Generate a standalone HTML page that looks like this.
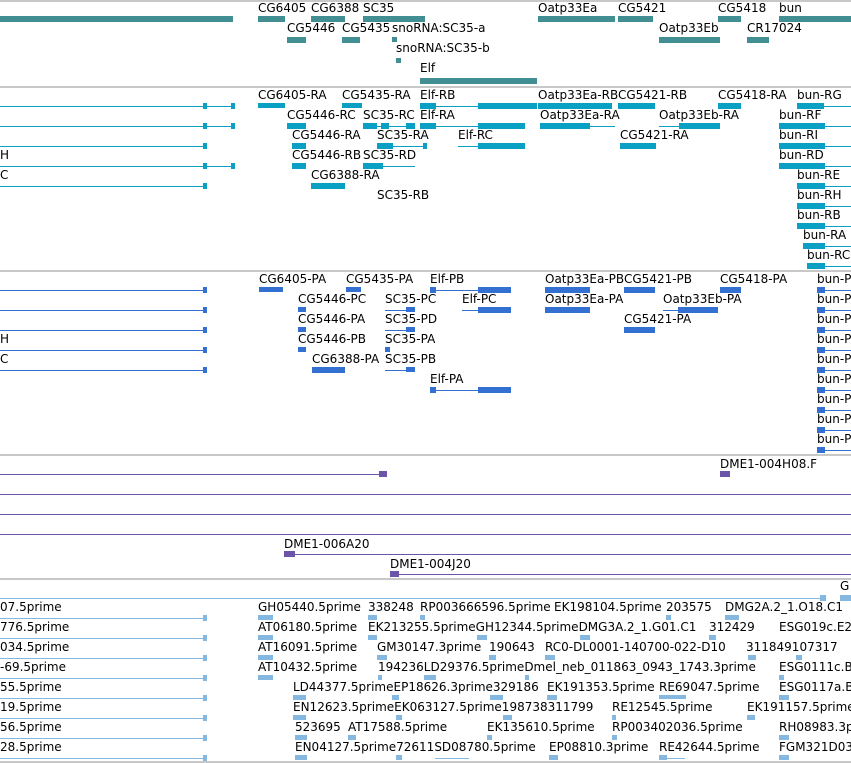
<!DOCTYPE html>
<html><head><meta charset="utf-8"><style>
*{margin:0;padding:0}
body{width:851px;height:763px;background:#fff;position:relative;overflow:hidden;font-family:"DejaVu Sans","Liberation Sans",sans-serif}
.t{position:absolute;font-size:12px;line-height:13px;letter-spacing:0;color:#000;white-space:nowrap}
.s{position:absolute;left:0;width:851px;height:2px;background:#c8c8c8}
.b{position:absolute}
.l{position:absolute;height:1px}
.T{background:#418e93}.C{background:#0aa0c3}.B{background:#3370d2}.P{background:#6c55a8}.E{background:#85b8e0}
</style></head><body>
<div class="s" style="top:0"></div>
<div class="s" style="top:86px"></div>
<div class="s" style="top:270px"></div>
<div class="s" style="top:454px"></div>
<div class="s" style="top:578px"></div>
<div class="s" style="top:761px"></div>

<div class="b T" style="left:0;top:16px;width:233px;height:6px"></div>
<div class="t" style="left:258px;top:2px">CG6405</div><div class="b T" style="left:258px;top:16px;width:27px;height:6px"></div>
<div class="t" style="left:311px;top:2px">CG6388</div><div class="b T" style="left:311px;top:16px;width:34px;height:6px"></div>
<div class="t" style="left:363px;top:2px">SC35</div><div class="b T" style="left:363px;top:16px;width:62px;height:6px"></div>
<div class="t" style="left:538px;top:2px">Oatp33Ea</div><div class="b T" style="left:538px;top:16px;width:77px;height:6px"></div>
<div class="t" style="left:618px;top:2px">CG5421</div><div class="b T" style="left:618px;top:16px;width:35px;height:6px"></div>
<div class="t" style="left:718px;top:2px">CG5418</div><div class="b T" style="left:718px;top:16px;width:23px;height:6px"></div>
<div class="t" style="left:779px;top:2px">bun</div><div class="b T" style="left:779px;top:16px;width:72px;height:6px"></div>
<div class="t" style="left:287px;top:22px">CG5446</div><div class="b T" style="left:287px;top:37px;width:19px;height:6px"></div>
<div class="t" style="left:342px;top:22px">CG5435</div><div class="b T" style="left:342px;top:37px;width:18px;height:6px"></div>
<div class="t" style="left:392px;top:22px">snoRNA:SC35-a</div><div class="b T" style="left:392px;top:37px;width:5px;height:5px"></div>
<div class="t" style="left:659px;top:22px">Oatp33Eb</div><div class="b T" style="left:659px;top:37px;width:61px;height:6px"></div>
<div class="t" style="left:747px;top:22px">CR17024</div><div class="b T" style="left:747px;top:37px;width:22px;height:6px"></div>
<div class="t" style="left:396px;top:42px">snoRNA:SC35-b</div><div class="b T" style="left:396px;top:58px;width:5px;height:5px"></div>
<div class="t" style="left:420px;top:62px">Elf</div><div class="b T" style="left:420px;top:78px;width:117px;height:6px"></div>

<div class="l C" style="left:0;top:106px;width:235px"></div>
<div class="l C" style="left:0;top:126px;width:235px"></div>
<div class="l C" style="left:0;top:146px;width:207px"></div>
<div class="l C" style="left:0;top:166px;width:235px"></div>
<div class="l C" style="left:0;top:186px;width:207px"></div>
<div class="b C" style="left:203px;top:103px;width:4px;height:6px"></div><div class="b C" style="left:231px;top:103px;width:4px;height:6px"></div>
<div class="b C" style="left:203px;top:123px;width:4px;height:6px"></div><div class="b C" style="left:231px;top:123px;width:4px;height:6px"></div>
<div class="b C" style="left:203px;top:143px;width:4px;height:6px"></div>
<div class="b C" style="left:203px;top:163px;width:4px;height:6px"></div><div class="b C" style="left:231px;top:163px;width:4px;height:6px"></div>
<div class="b C" style="left:203px;top:183px;width:4px;height:6px"></div>
<div class="t" style="left:0;top:149px">H</div><div class="t" style="left:0;top:169px">C</div>

<div class="t" style="left:258px;top:89px">CG6405-RA</div><div class="b C" style="left:258px;top:103px;width:27px;height:5px"></div>
<div class="t" style="left:342px;top:89px">CG5435-RA</div><div class="b C" style="left:342px;top:103px;width:20px;height:5px"></div>
<div class="t" style="left:420px;top:89px">Elf-RB</div><div class="l C" style="left:420px;top:106px;width:117px"></div><div class="b C" style="left:420px;top:103px;width:16px;height:6px"></div><div class="b C" style="left:478px;top:103px;width:59px;height:6px"></div>
<div class="t" style="left:538px;top:89px">Oatp33Ea-RB</div><div class="b C" style="left:538px;top:103px;width:74px;height:6px"></div>
<div class="t" style="left:618px;top:89px">CG5421-RB</div><div class="b C" style="left:618px;top:103px;width:37px;height:6px"></div>
<div class="t" style="left:718px;top:89px">CG5418-RA</div><div class="b C" style="left:718px;top:103px;width:23px;height:6px"></div>
<div class="t" style="left:797px;top:89px">bun-RG</div><div class="b C" style="left:797px;top:103px;width:27px;height:6px"></div><div class="l C" style="left:824px;top:106px;width:27px"></div>

<div class="t" style="left:287px;top:109px">CG5446-RC</div><div class="b C" style="left:287px;top:123px;width:19px;height:6px"></div>
<div class="t" style="left:363px;top:109px">SC35-RC</div><div class="l C" style="left:363px;top:126px;width:52px"></div><div class="b C" style="left:363px;top:123px;width:14px;height:6px"></div><div class="b C" style="left:381px;top:123px;width:8px;height:6px"></div><div class="b C" style="left:406px;top:123px;width:9px;height:6px"></div>
<div class="t" style="left:420px;top:109px">Elf-RA</div><div class="l C" style="left:420px;top:126px;width:105px"></div><div class="b C" style="left:420px;top:123px;width:16px;height:6px"></div><div class="b C" style="left:478px;top:123px;width:47px;height:6px"></div>
<div class="t" style="left:540px;top:109px">Oatp33Ea-RA</div><div class="b C" style="left:540px;top:123px;width:50px;height:6px"></div><div class="l C" style="left:540px;top:126px;width:75px"></div>
<div class="t" style="left:659px;top:109px">Oatp33Eb-RA</div><div class="l C" style="left:659px;top:126px;width:61px"></div><div class="b C" style="left:679px;top:123px;width:41px;height:6px"></div>
<div class="t" style="left:779px;top:109px">bun-RF</div><div class="b C" style="left:779px;top:123px;width:46px;height:6px"></div><div class="l C" style="left:825px;top:126px;width:26px"></div>

<div class="t" style="left:292px;top:129px">CG5446-RA</div><div class="b C" style="left:292px;top:143px;width:14px;height:6px"></div>
<div class="t" style="left:377px;top:129px">SC35-RA</div><div class="l C" style="left:377px;top:146px;width:50px"></div><div class="b C" style="left:377px;top:143px;width:16px;height:6px"></div><div class="b C" style="left:423px;top:143px;width:4px;height:6px"></div>
<div class="t" style="left:458px;top:129px">Elf-RC</div><div class="l C" style="left:458px;top:146px;width:67px"></div><div class="b C" style="left:478px;top:143px;width:47px;height:6px"></div>
<div class="t" style="left:620px;top:129px">CG5421-RA</div><div class="b C" style="left:620px;top:143px;width:36px;height:6px"></div>
<div class="t" style="left:779px;top:129px">bun-RI</div><div class="b C" style="left:779px;top:143px;width:46px;height:6px"></div><div class="l C" style="left:825px;top:146px;width:26px"></div>

<div class="t" style="left:292px;top:149px">CG5446-RB</div><div class="b C" style="left:292px;top:163px;width:14px;height:6px"></div>
<div class="t" style="left:363px;top:149px">SC35-RD</div><div class="b C" style="left:363px;top:163px;width:20px;height:6px"></div><div class="l C" style="left:383px;top:166px;width:32px"></div>
<div class="t" style="left:779px;top:149px">bun-RD</div><div class="b C" style="left:779px;top:163px;width:46px;height:6px"></div><div class="l C" style="left:825px;top:166px;width:26px"></div>

<div class="t" style="left:311px;top:169px">CG6388-RA</div><div class="b C" style="left:311px;top:183px;width:34px;height:6px"></div>
<div class="t" style="left:797px;top:169px">bun-RE</div><div class="b C" style="left:797px;top:183px;width:28px;height:6px"></div><div class="l C" style="left:825px;top:186px;width:26px"></div>
<div class="t" style="left:377px;top:189px">SC35-RB</div>
<div class="t" style="left:797px;top:189px">bun-RH</div><div class="b C" style="left:797px;top:203px;width:28px;height:6px"></div><div class="l C" style="left:825px;top:206px;width:26px"></div>
<div class="t" style="left:797px;top:209px">bun-RB</div><div class="b C" style="left:797px;top:223px;width:28px;height:6px"></div><div class="l C" style="left:825px;top:226px;width:26px"></div>
<div class="t" style="left:803px;top:229px">bun-RA</div><div class="b C" style="left:803px;top:243px;width:22px;height:6px"></div><div class="l C" style="left:825px;top:246px;width:26px"></div>
<div class="t" style="left:807px;top:249px">bun-RC</div><div class="b C" style="left:807px;top:263px;width:18px;height:6px"></div><div class="l C" style="left:825px;top:266px;width:26px"></div>

<div class="l B" style="left:0;top:290px;width:207px"></div>
<div class="l B" style="left:0;top:310px;width:207px"></div>
<div class="l B" style="left:0;top:330px;width:207px"></div>
<div class="l B" style="left:0;top:350px;width:207px"></div>
<div class="l B" style="left:0;top:370px;width:207px"></div>
<div class="b B" style="left:203px;top:287px;width:4px;height:6px"></div>
<div class="b B" style="left:203px;top:307px;width:4px;height:6px"></div>
<div class="b B" style="left:203px;top:327px;width:4px;height:6px"></div>
<div class="b B" style="left:203px;top:347px;width:4px;height:6px"></div>
<div class="b B" style="left:203px;top:367px;width:4px;height:6px"></div>
<div class="t" style="left:0;top:333px">H</div><div class="t" style="left:0;top:353px">C</div>

<div class="t" style="left:259px;top:273px">CG6405-PA</div><div class="b B" style="left:259px;top:287px;width:24px;height:5px"></div>
<div class="t" style="left:346px;top:273px">CG5435-PA</div><div class="b B" style="left:346px;top:287px;width:15px;height:5px"></div>
<div class="t" style="left:430px;top:273px">Elf-PB</div><div class="l B" style="left:430px;top:290px;width:81px"></div><div class="b B" style="left:430px;top:287px;width:6px;height:6px"></div><div class="b B" style="left:478px;top:287px;width:33px;height:6px"></div>
<div class="t" style="left:545px;top:273px">Oatp33Ea-PB</div><div class="b B" style="left:545px;top:287px;width:45px;height:6px"></div>
<div class="t" style="left:624px;top:273px">CG5421-PB</div><div class="b B" style="left:624px;top:287px;width:31px;height:6px"></div>
<div class="t" style="left:720px;top:273px">CG5418-PA</div><div class="b B" style="left:720px;top:287px;width:21px;height:6px"></div>

<div class="t" style="left:298px;top:293px">CG5446-PC</div><div class="b B" style="left:298px;top:307px;width:8px;height:5px"></div>
<div class="t" style="left:385px;top:293px">SC35-PC</div><div class="l B" style="left:385px;top:310px;width:30px"></div><div class="b B" style="left:406px;top:307px;width:9px;height:5px"></div>
<div class="t" style="left:462px;top:293px">Elf-PC</div><div class="l B" style="left:462px;top:310px;width:49px"></div><div class="b B" style="left:478px;top:307px;width:33px;height:6px"></div>
<div class="t" style="left:545px;top:293px">Oatp33Ea-PA</div><div class="b B" style="left:545px;top:307px;width:45px;height:6px"></div>
<div class="t" style="left:663px;top:293px">Oatp33Eb-PA</div><div class="l B" style="left:663px;top:310px;width:55px"></div><div class="b B" style="left:678px;top:307px;width:40px;height:6px"></div>

<div class="t" style="left:298px;top:313px">CG5446-PA</div><div class="b B" style="left:298px;top:327px;width:8px;height:5px"></div>
<div class="t" style="left:385px;top:313px">SC35-PD</div><div class="l B" style="left:385px;top:330px;width:30px"></div><div class="b B" style="left:406px;top:327px;width:9px;height:5px"></div>
<div class="t" style="left:624px;top:313px">CG5421-PA</div><div class="b B" style="left:624px;top:327px;width:31px;height:6px"></div>
<div class="t" style="left:298px;top:333px">CG5446-PB</div><div class="b B" style="left:298px;top:347px;width:8px;height:5px"></div>
<div class="t" style="left:385px;top:333px">SC35-PA</div><div class="b B" style="left:385px;top:347px;width:5px;height:5px"></div>
<div class="t" style="left:312px;top:353px">CG6388-PA</div><div class="b B" style="left:312px;top:367px;width:33px;height:6px"></div>
<div class="t" style="left:385px;top:353px">SC35-PB</div><div class="l B" style="left:385px;top:370px;width:30px"></div><div class="b B" style="left:406px;top:367px;width:9px;height:5px"></div>
<div class="t" style="left:430px;top:373px">Elf-PA</div><div class="l B" style="left:430px;top:390px;width:81px"></div><div class="b B" style="left:430px;top:387px;width:6px;height:6px"></div><div class="b B" style="left:478px;top:387px;width:33px;height:6px"></div>

<div class="t" style="left:817px;top:273px">bun-P</div><div class="b B" style="left:817px;top:287px;width:8px;height:6px"></div><div class="l B" style="left:817px;top:290px;width:34px"></div>
<div class="t" style="left:817px;top:293px">bun-P</div><div class="b B" style="left:817px;top:307px;width:8px;height:6px"></div><div class="l B" style="left:817px;top:310px;width:34px"></div>
<div class="t" style="left:817px;top:313px">bun-P</div><div class="b B" style="left:817px;top:327px;width:8px;height:6px"></div><div class="l B" style="left:817px;top:330px;width:34px"></div>
<div class="t" style="left:817px;top:333px">bun-P</div><div class="b B" style="left:817px;top:347px;width:8px;height:6px"></div><div class="l B" style="left:817px;top:350px;width:34px"></div>
<div class="t" style="left:817px;top:353px">bun-P</div><div class="b B" style="left:817px;top:367px;width:8px;height:6px"></div><div class="l B" style="left:817px;top:370px;width:34px"></div>
<div class="t" style="left:817px;top:373px">bun-P</div><div class="b B" style="left:817px;top:387px;width:8px;height:6px"></div><div class="l B" style="left:817px;top:390px;width:34px"></div>
<div class="t" style="left:817px;top:393px">bun-P</div><div class="b B" style="left:817px;top:407px;width:8px;height:6px"></div><div class="l B" style="left:817px;top:410px;width:34px"></div>
<div class="t" style="left:817px;top:413px">bun-P</div><div class="b B" style="left:817px;top:427px;width:8px;height:6px"></div><div class="l B" style="left:817px;top:430px;width:34px"></div>
<div class="t" style="left:817px;top:433px">bun-P</div><div class="b B" style="left:817px;top:447px;width:8px;height:6px"></div><div class="l B" style="left:817px;top:450px;width:34px"></div>

<div class="l P" style="left:0;top:474px;width:385px"></div><div class="b P" style="left:379px;top:471px;width:8px;height:6px"></div>
<div class="t" style="left:720px;top:458px">DME1-004H08.F</div><div class="b P" style="left:720px;top:471px;width:10px;height:6px"></div>
<div class="l P" style="left:0;top:494px;width:851px"></div>
<div class="l P" style="left:0;top:514px;width:851px"></div>
<div class="l P" style="left:0;top:534px;width:851px"></div>
<div class="t" style="left:284px;top:538px">DME1-006A20</div><div class="l P" style="left:284px;top:554px;width:567px"></div><div class="b P" style="left:284px;top:551px;width:11px;height:6px"></div>
<div class="t" style="left:390px;top:558px">DME1-004J20</div><div class="l P" style="left:390px;top:574px;width:461px"></div><div class="b P" style="left:390px;top:571px;width:9px;height:6px"></div>

<div class="l E" style="left:0;top:598px;width:825px"></div><div class="b E" style="left:820px;top:595px;width:6px;height:6px"></div>
<div class="t" style="left:840px;top:580px">G</div><div class="b E" style="left:840px;top:595px;width:11px;height:6px"></div>
<div class="l E" style="left:0;top:618px;width:207px"></div><div class="b E" style="left:203px;top:615px;width:4px;height:6px"></div>
<div class="l E" style="left:0;top:638px;width:207px"></div><div class="b E" style="left:203px;top:635px;width:4px;height:6px"></div>
<div class="l E" style="left:0;top:658px;width:207px"></div><div class="b E" style="left:203px;top:655px;width:4px;height:6px"></div>
<div class="l E" style="left:0;top:678px;width:207px"></div><div class="b E" style="left:203px;top:675px;width:4px;height:6px"></div>
<div class="l E" style="left:0;top:698px;width:207px"></div><div class="b E" style="left:203px;top:695px;width:4px;height:6px"></div>
<div class="l E" style="left:0;top:718px;width:207px"></div><div class="b E" style="left:203px;top:715px;width:4px;height:6px"></div>
<div class="l E" style="left:0;top:738px;width:207px"></div><div class="b E" style="left:203px;top:735px;width:4px;height:6px"></div>
<div class="l E" style="left:0;top:758px;width:207px"></div><div class="b E" style="left:203px;top:755px;width:4px;height:6px"></div>
<div class="t" style="left:0;top:601px">07.5prime</div>
<div class="t" style="left:0;top:621px">776.5prime</div>
<div class="t" style="left:0;top:641px">034.5prime</div>
<div class="t" style="left:0;top:661px">-69.5prime</div>
<div class="t" style="left:0;top:681px">55.5prime</div>
<div class="t" style="left:0;top:701px">19.5prime</div>
<div class="t" style="left:0;top:721px">56.5prime</div>
<div class="t" style="left:0;top:741px">28.5prime</div>

<div class="t" style="left:258px;top:601px">GH05440.5prime</div><div class="b E" style="left:258px;top:615px;width:15px;height:5px"></div>
<div class="t" style="left:368px;top:601px">338248</div><div class="b E" style="left:368px;top:615px;width:9px;height:5px"></div>
<div class="t" style="left:420px;top:601px">RP003666596.5prime</div><div class="b E" style="left:420px;top:615px;width:5px;height:5px"></div>
<div class="t" style="left:554px;top:601px">EK198104.5prime</div>
<div class="t" style="left:666px;top:601px">203575</div><div class="b E" style="left:666px;top:615px;width:5px;height:5px"></div>
<div class="t" style="left:725px;top:601px">DMG2A.2_1.O18.C1</div><div class="b E" style="left:725px;top:615px;width:14px;height:5px"></div>

<div class="t" style="left:258px;top:621px">AT06180.5prime</div><div class="b E" style="left:258px;top:635px;width:15px;height:5px"></div>
<div class="t" style="left:368px;top:621px">EK213255.5primeGH12344.5primeDMG3A.2_1.G01.C1</div><div class="b E" style="left:368px;top:635px;width:9px;height:5px"></div><div class="b E" style="left:477px;top:635px;width:10px;height:5px"></div><div class="b E" style="left:580px;top:635px;width:10px;height:5px"></div>
<div class="t" style="left:709px;top:621px">312429</div><div class="b E" style="left:709px;top:635px;width:7px;height:5px"></div>
<div class="t" style="left:779px;top:621px">ESG019c.E2</div>

<div class="t" style="left:258px;top:641px">AT16091.5prime</div><div class="b E" style="left:258px;top:655px;width:15px;height:5px"></div>
<div class="t" style="left:377px;top:641px">GM30147.3prime</div><div class="b E" style="left:377px;top:655px;width:10px;height:5px"></div>
<div class="t" style="left:489px;top:641px">190643</div><div class="b E" style="left:489px;top:655px;width:7px;height:5px"></div>
<div class="t" style="left:545px;top:641px">RC0-DL0001-140700-022-D10</div><div class="b E" style="left:545px;top:655px;width:10px;height:5px"></div>
<div class="t" style="left:746px;top:641px">311849107317</div><div class="b E" style="left:748px;top:655px;width:8px;height:5px"></div><div class="b E" style="left:796px;top:655px;width:6px;height:5px"></div>

<div class="t" style="left:258px;top:661px">AT10432.5prime</div><div class="b E" style="left:258px;top:675px;width:15px;height:5px"></div>
<div class="t" style="left:378px;top:661px">194236LD29376.5primeDmel_neb_011863_0943_1743.3prime</div><div class="b E" style="left:378px;top:675px;width:4px;height:5px"></div><div class="b E" style="left:424px;top:675px;width:12px;height:5px"></div><div class="b E" style="left:525px;top:675px;width:4px;height:5px"></div>
<div class="t" style="left:779px;top:661px">ESG0111c.B</div><div class="b E" style="left:779px;top:675px;width:5px;height:5px"></div>

<div class="t" style="left:293px;top:681px">LD44377.5primeEP18626.3prime329186</div><div class="b E" style="left:293px;top:695px;width:13px;height:5px"></div><div class="b E" style="left:392px;top:695px;width:7px;height:5px"></div><div class="b E" style="left:490px;top:695px;width:13px;height:5px"></div>
<div class="t" style="left:547px;top:681px">EK191353.5prime</div><div class="b E" style="left:547px;top:695px;width:10px;height:5px"></div>
<div class="t" style="left:659px;top:681px">RE69047.5prime</div><div class="b E" style="left:659px;top:695px;width:27px;height:4px"></div>
<div class="t" style="left:779px;top:681px">ESG0117a.B</div><div class="b E" style="left:779px;top:695px;width:10px;height:5px"></div>

<div class="t" style="left:293px;top:701px">EN12623.5primeEK063127.5prime198738311799</div><div class="b E" style="left:293px;top:715px;width:13px;height:5px"></div><div class="b E" style="left:396px;top:715px;width:6px;height:5px"></div><div class="b E" style="left:503px;top:715px;width:9px;height:5px"></div>
<div class="t" style="left:612px;top:701px">RE12545.5prime</div><div class="b E" style="left:612px;top:715px;width:4px;height:5px"></div>
<div class="t" style="left:747px;top:701px">EK191157.5prime</div><div class="b E" style="left:747px;top:715px;width:8px;height:5px"></div>

<div class="t" style="left:295px;top:721px">523695</div><div class="b E" style="left:295px;top:735px;width:12px;height:5px"></div>
<div class="t" style="left:348px;top:721px">AT17588.5prime</div><div class="b E" style="left:348px;top:735px;width:8px;height:5px"></div>
<div class="t" style="left:487px;top:721px">EK135610.5prime</div><div class="b E" style="left:487px;top:735px;width:5px;height:5px"></div>
<div class="t" style="left:612px;top:721px">RP003402036.5prime</div><div class="b E" style="left:612px;top:735px;width:5px;height:5px"></div>
<div class="t" style="left:779px;top:721px">RH08983.3p</div><div class="b E" style="left:779px;top:735px;width:10px;height:5px"></div>

<div class="t" style="left:295px;top:741px">EN04127.5prime72611SD08780.5prime</div><div class="b E" style="left:295px;top:755px;width:12px;height:5px"></div><div class="b E" style="left:396px;top:755px;width:6px;height:5px"></div><div class="l E" style="left:435px;top:758px;width:34px"></div>
<div class="t" style="left:549px;top:741px">EP08810.3prime</div><div class="b E" style="left:549px;top:755px;width:9px;height:5px"></div>
<div class="t" style="left:659px;top:741px">RE42644.5prime</div><div class="l E" style="left:659px;top:758px;width:26px"></div><div class="b E" style="left:659px;top:755px;width:8px;height:5px"></div>
<div class="t" style="left:779px;top:741px">FGM321D03</div><div class="b E" style="left:779px;top:755px;width:10px;height:5px"></div>
</body></html>
